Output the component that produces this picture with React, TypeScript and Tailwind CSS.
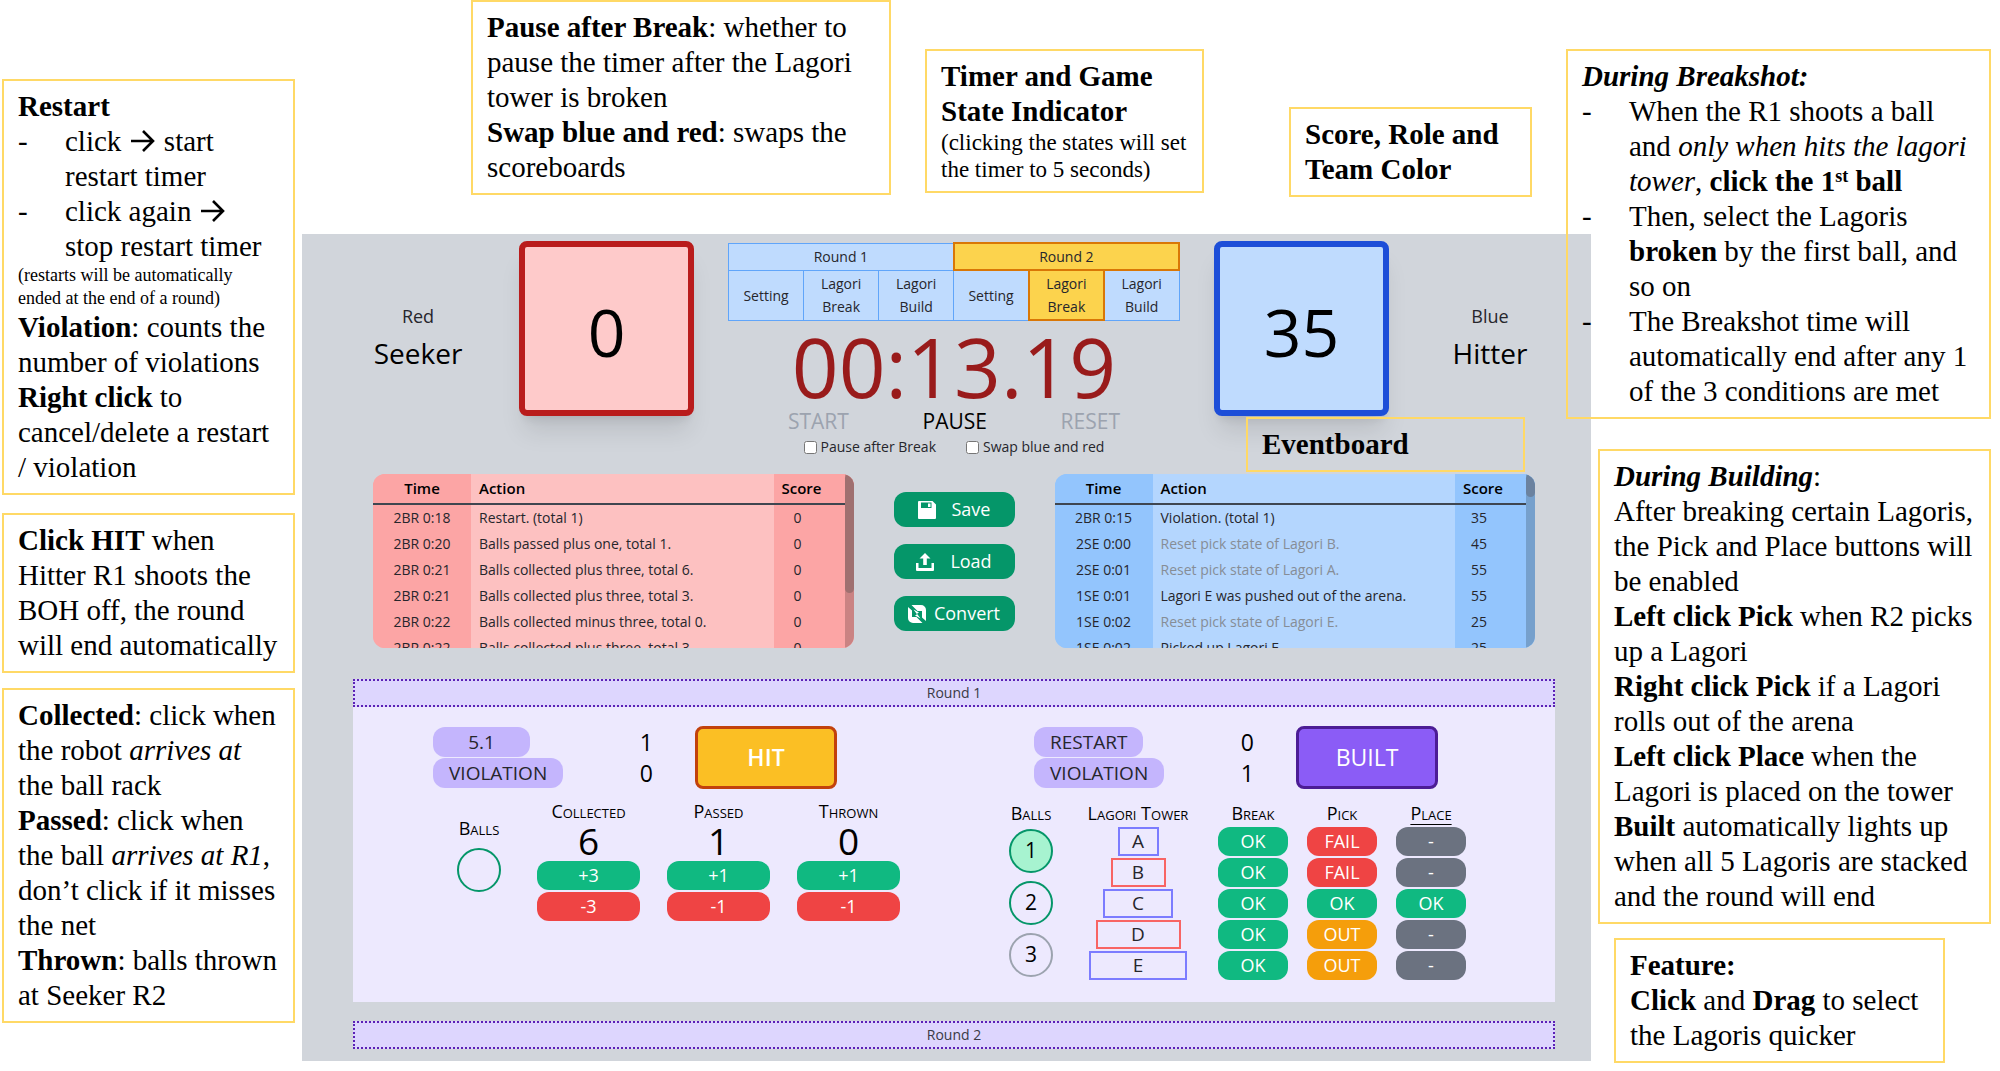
import React from "react";

const serif = "font-['Liberation_Serif',serif]";
const sans = "font-['Open_Sans',sans-serif]";

function Callout({ className = "", children }: { className?: string; children: React.ReactNode }) {
  return (
    <div
      className={`whitespace-nowrap border-2 border-[#ffd966] px-[14px] py-2 text-[29px] leading-[35px] text-black ${className}`}
    >
      {children}
    </div>
  );
}

function Arrow() {
  return (
    <svg viewBox="0 0 24 22" className="mx-0.5 inline h-[22px] w-6 align-[-1px]" fill="none" stroke="currentColor" strokeWidth="2.6" aria-hidden="true">
      <path d="M0 11h22M12 1l10 10-10 10" />
    </svg>
  );
}

function SaveIcon() {
  return (
    <svg viewBox="0 0 18 18" className="size-[18px]" fill="currentColor" fillRule="evenodd" aria-hidden="true">
      <path d="M1 0h13.500L18 3.500V17a1 1 0 0 1-1 1H1a1 1 0 0 1-1-1V1a1 1 0 0 1 1-1zM3 1.500v5.500h10.500v-5.500zM10 2.500h2.500v3.500h-2.500z" />
    </svg>
  );
}

function LoadIcon() {
  return (
    <svg viewBox="0 0 18 18" className="size-[18px]" fill="currentColor" aria-hidden="true">
      <path d="M9 0l5.500 5.500h-3.700V12H7.200V5.500H3.500z" />
      <path d="M0 10h2.500v5h13v-5H18v7a1 1 0 0 1-1 1H1a1 1 0 0 1-1-1z" />
    </svg>
  );
}

function ConvertIcon() {
  return (
    <svg viewBox="0 0 18 18" className="size-[18px]" fill="currentColor" aria-hidden="true">
      <path d="M3.500 0H13a5 5 0 0 1 5 5v11l-4-3.500V6H9.500z" />
      <path d="M14.500 18H5a5 5 0 0 1-5-5V2l4 3.500V12h4.500z" />
      <path d="M5.500 4.500l5.500 3-2 1.200 3.500 4.800L7 10.500l2-1.200z" />
    </svg>
  );
}

type Row = [string, string, string, boolean?];

const redRows: Row[] = [
  ["2BR 0:18", "Restart. (total 1)", "0"],
  ["2BR 0:20", "Balls passed plus one, total 1.", "0"],
  ["2BR 0:21", "Balls collected plus three, total 6.", "0"],
  ["2BR 0:21", "Balls collected plus three, total 3.", "0"],
  ["2BR 0:22", "Balls collected minus three, total 0.", "0"],
  ["2BR 0:22", "Balls collected plus three, total 3.", "0"],
];

const blueRows: Row[] = [
  ["2BR 0:15", "Violation. (total 1)", "35"],
  ["2SE 0:00", "Reset pick state of Lagori B.", "45", true],
  ["2SE 0:01", "Reset pick state of Lagori A.", "55", true],
  ["1SE 0:01", "Lagori E was pushed out of the arena.", "55"],
  ["1SE 0:02", "Reset pick state of Lagori E.", "25", true],
  ["1SE 0:02", "Picked up Lagori E.", "25"],
];

function EventTable({ rows, red }: { rows: Row[]; red?: boolean }) {
  const side = red ? "bg-[#fca5a5]" : "bg-[#93c5fd]";
  const mid = red ? "bg-[#fdc1c1]" : "bg-[#b4d6fe]";
  const line = "border-b-2 border-[#3f4650]";
  return (
    <div className={`relative h-[174px] overflow-hidden rounded-xl ${side}`}>
      <table className="w-full table-fixed border-collapse text-[14px] text-[#26262c]">
        <colgroup>
          <col className="w-[98px]" />
          <col />
          <col className="w-[80px]" />
        </colgroup>
        <thead>
          <tr className="h-[30px] text-[15px] text-black">
            <th className={`${side} ${line} p-0 font-semibold`}>Time</th>
            <th className={`${mid} ${line} px-2 py-0 text-left font-semibold`}>Action</th>
            <th className={`${side} ${line} py-0 pl-2 text-left font-semibold`}>Score</th>
          </tr>
        </thead>
        <tbody>
          {rows.map((r, i) => (
            <tr key={i} className="h-[26px] leading-[26px]">
              <td className={`${side} p-0 text-center`}>{r[0]}</td>
              <td className={`${mid} px-2 py-0 ${r[3] ? "text-[#868d96]" : ""}`}>{r[1]}</td>
              <td className={`${side} py-0 pr-[32px] text-center`}>{r[2]}</td>
            </tr>
          ))}
        </tbody>
      </table>
      <div className={`absolute inset-y-0 right-0 w-[9px] ${red ? "bg-[#ca8383]" : "bg-[#76a0cc]"}`}>
        <div className={`w-full rounded-full ${red ? "h-[119px] bg-[#9f7070]" : "h-[23px] bg-[#6b829f]"}`} />
      </div>
    </div>
  );
}

const stages = ["Setting", "Lagori Break", "Lagori Build", "Setting", "Lagori Break", "Lagori Build"];

function StateTable() {
  const idle = "border border-[#60a5fa] bg-[#bfdbfe]";
  const active = "border-2 border-[#d97706] bg-[#fcd34d]";
  return (
    <table className="mt-px w-[452px] table-fixed border-collapse text-center text-[14px] leading-[23px] text-[#26262c]">
      <tbody>
        <tr className="h-[27px]">
          <td colSpan={3} className={`p-0 ${idle}`}>Round 1</td>
          <td colSpan={3} className={`p-0 ${active}`}>Round 2</td>
        </tr>
        <tr className="h-[50px]">
          {stages.map((s, i) => (
            <td key={i} className={`px-3 py-0 ${i === 4 ? active : idle}`}>{s}</td>
          ))}
        </tr>
      </tbody>
    </table>
  );
}

function ScoreCard({ value, red }: { value: string; red?: boolean }) {
  return (
    <div
      className={`flex size-[175px] items-center justify-center rounded-lg border-[6px] pt-1.5 text-[66px] text-black shadow-xl ${
        red ? "border-[#b91c1c] bg-[#fecaca]" : "border-[#1d4ed8] bg-[#bfdbfe]"
      }`}
    >
      {value}
    </div>
  );
}

function TeamLabel({ team, role }: { team: string; role: string }) {
  return (
    <div className="pt-[61px] text-center">
      <div className="text-[18px] leading-7 text-[#26262c]">{team}</div>
      <div className="text-[28px] leading-[46px] text-black">{role}</div>
    </div>
  );
}

function ActionButton({ icon, children, tight }: { icon: React.ReactNode; children: string; tight?: boolean }) {
  return (
    <button
      type="button"
      className={`flex h-[35px] items-center justify-center rounded-xl bg-[#059669] text-[18px] text-white ${tight ? "gap-2" : "gap-4"}`}
    >
      {icon}
      {children}
    </button>
  );
}

function Counter({ label, value, wide }: { label: string; value: string; wide?: boolean }) {
  return (
    <div className="flex h-[30px] items-center justify-between">
      <button
        type="button"
        className={`h-[30px] rounded-xl bg-[#c4b5fd] text-[19px] leading-7 text-[#26262c] ${wide ? "w-[97px]" : "px-4"}`}
      >
        {label}
      </button>
      <span className="text-[23px] leading-[28px] text-black">{value}</span>
    </div>
  );
}

const caps = "whitespace-nowrap text-center text-[18px] leading-6 text-black [font-variant:small-caps]";

function BallStat({ label, value, step }: { label: string; value: string; step: string }) {
  return (
    <div className="flex w-[103px] flex-col">
      <div className={caps}>{label}</div>
      <div className="mb-0.5 text-center text-[37px] font-medium leading-9 text-black">{value}</div>
      <button type="button" className="h-[29px] rounded-xl bg-[#10b981] text-[18px] text-white">+{step}</button>
      <button type="button" className="mt-0.5 h-[29px] rounded-xl bg-[#ef4444] text-[18px] text-white">-{step}</button>
    </div>
  );
}

const pillColors: Record<string, string> = {
  OK: "bg-[#10b981]",
  FAIL: "bg-[#ef4444]",
  OUT: "bg-[#f59e0b]",
  "-": "bg-[#6b7280]",
};

function PillColumn({ label, items, underline }: { label: string; items: string[]; underline?: boolean }) {
  return (
    <div className="flex w-[70px] flex-col gap-0.5">
      <div className={`${caps} ${underline ? "underline underline-offset-4" : ""}`}>{label}</div>
      {items.map((s, i) => (
        <button key={i} type="button" className={`h-[29px] rounded-xl text-[18px] text-white ${pillColors[s]}`}>
          {s}
        </button>
      ))}
    </div>
  );
}

const tower = [
  { name: "A", cls: "w-[41px] border-[#7c7cff]" },
  { name: "B", cls: "w-[55px] border-[#f86464]" },
  { name: "C", cls: "w-[70px] border-[#7c7cff]" },
  { name: "D", cls: "w-[85px] border-[#f86464]" },
  { name: "E", cls: "w-[98px] border-[#7c7cff]" },
];

const balls = [
  { n: "1", cls: "border-[#059669] bg-[#a7f3d0]" },
  { n: "2", cls: "border-[#059669]" },
  { n: "3", cls: "border-[#9ca3af]" },
];

function RoundBar({ children }: { children: string }) {
  return (
    <h2 className="h-7 border-2 border-dotted border-[#5b21b6] bg-[#ddd6fe] text-center text-[14px] leading-6 text-[#3a3a45]">
      {children}
    </h2>
  );
}

export default function App() {
  return (
    <div className={`flex w-full items-start bg-white ${serif}`}>
      <aside className="w-[302px] shrink-0 pl-0.5 pr-[7px] pt-[79px]">
        <Callout>
          <b>Restart</b>
          <ul>
            {[
              <>click <Arrow /> start<br />restart timer</>,
              <>click again <Arrow /><br />stop restart timer</>,
            ].map((t, i) => (
              <li key={i} className="flex">
                <span className="w-[47px]">-</span>
                <span>{t}</span>
              </li>
            ))}
          </ul>
          <p className="text-[18px] leading-[23px]">
            (restarts will be automatically
            <br />
            ended at the end of a round)
          </p>
          <b>Violation</b>: counts the
          <br />
          number of violations
          <br />
          <b>Right click</b> to
          <br />
          cancel/delete a restart
          <br />/ violation
        </Callout>
        <Callout className="mt-[18px]">
          <b>Click HIT</b> when
          <br />
          Hitter R1 shoots the
          <br />
          BOH off, the round
          <br />
          will end automatically
        </Callout>
        <Callout className="mt-[15px]">
          <b>Collected</b>: click when
          <br />
          the robot <i>arrives at</i>
          <br />
          the ball rack
          <br />
          <b>Passed</b>: click when
          <br />
          the ball <i>arrives at R1</i>,
          <br />
          don’t click if it misses
          <br />
          the net
          <br />
          <b>Thrown</b>: balls thrown
          <br />
          at Seeker R2
        </Callout>
      </aside>

      <main className="min-w-0 flex-1">
        <div className="flex h-[234px] items-start pl-[169px]">
          <Callout className="w-[420px]">
            <b>Pause after Break</b>: whether to
            <br />
            pause the timer after the Lagori
            <br />
            tower is broken
            <br />
            <b>Swap blue and red</b>: swaps the
            <br />
            scoreboards
          </Callout>
          <Callout className="ml-[34px] mt-[49px] w-[279px]">
            <b>
              Timer and Game
              <br />
              State Indicator
            </b>
            <p className="text-[23px] leading-[27px]">
              (clicking the states will set
              <br />
              the timer to 5 seconds)
            </p>
          </Callout>
          <Callout className="ml-[85px] mt-[107px] w-[243px]">
            <b>
              Score, Role and
              <br />
              Team Color
            </b>
          </Callout>
        </div>

        <div className={`relative bg-[#d1d5db] pb-3 pt-[7px] ${sans}`}>
          <div className="grid grid-cols-[1fr_175px_520px_175px_1fr] pl-[15px]">
            <TeamLabel team="Red" role="Seeker" />
            <ScoreCard value="0" red />
            <div className="flex flex-col items-center">
              <StateTable />
              <div className="mb-1 mt-2 text-[82px] leading-[74px] text-[#991b1b]">00:13.19</div>
              <div className="flex w-[332px] justify-between text-[21px] leading-7">
                <button type="button" className="text-[#9ca3af]">START</button>
                <button type="button" className="font-medium text-black">PAUSE</button>
                <button type="button" className="text-[#9ca3af]">RESET</button>
              </div>
              <div className="mt-0.5 flex gap-[30px] text-[14px] leading-5 text-[#26262c]">
                <label className="flex items-center gap-1">
                  <input type="checkbox" className="size-[13px]" />
                  Pause after Break
                </label>
                <label className="flex items-center gap-1">
                  <input type="checkbox" className="size-[13px]" />
                  Swap blue and red
                </label>
              </div>
            </div>
            <ScoreCard value="35" />
            <TeamLabel team="Blue" role="Hitter" />
          </div>

          <div className="mt-[17px] grid grid-cols-[1fr_121px_1fr] gap-x-10 pl-[71px] pr-14">
            <EventTable rows={redRows} red />
            <div className="flex flex-col gap-[17px] pt-[18px]">
              <ActionButton icon={<SaveIcon />}>Save</ActionButton>
              <ActionButton icon={<LoadIcon />}>Load</ActionButton>
              <ActionButton icon={<ConvertIcon />} tight>Convert</ActionButton>
            </div>
            <EventTable rows={blueRows} />
          </div>

          <div className="mt-[31px] pl-[51px] pr-9">
            <RoundBar>Round 1</RoundBar>
            <div className="grid h-[295px] grid-cols-2 bg-[#ede9fe] pt-5">
              <section>
                <div className="flex items-start gap-[42px] pl-20">
                  <div className="flex w-[220px] flex-col gap-px">
                    <Counter label="5.1" value="1" wide />
                    <Counter label="VIOLATION" value="0" />
                  </div>
                  <button type="button" className="-mt-px h-[63px] w-[142px] rounded-lg border-[3px] border-[#c2410c] bg-[#fbbf24] text-[23px] font-semibold text-white">
                    HIT
                  </button>
                </div>
                <div className="flex pl-[104px] pt-2.5">
                  <div className="mr-9 w-11 pt-[17px]">
                    <div className={caps}>Balls</div>
                    <button type="button" aria-label="Ball" className="mt-2 size-11 rounded-full border-2 border-[#059669]" />
                  </div>
                  <div className="flex gap-[27px]">
                    <BallStat label="Collected" value="6" step="3" />
                    <BallStat label="Passed" value="1" step="1" />
                    <BallStat label="Thrown" value="0" step="1" />
                  </div>
                </div>
              </section>

              <section>
                <div className="flex items-start gap-[42px] pl-20">
                  <div className="flex w-[220px] flex-col gap-px">
                    <Counter label="RESTART" value="0" />
                    <Counter label="VIOLATION" value="1" />
                  </div>
                  <button type="button" className="-mt-px h-[63px] w-[142px] rounded-lg border-[3px] border-[#4c1d95] bg-[#8b5cf6] text-[23px] text-white">
                    BUILT
                  </button>
                </div>
                <div className="flex pl-[55px] pt-3">
                  <div className="flex w-11 flex-col gap-2">
                    <div className={`-mb-1 ${caps}`}>Balls</div>
                    {balls.map((b) => (
                      <button key={b.n} type="button" className={`size-11 rounded-full border-2 text-[21px] text-black ${b.cls}`}>
                        {b.n}
                      </button>
                    ))}
                  </div>
                  <div className="ml-8 flex w-[106px] flex-col items-center gap-0.5">
                    <div className={caps}>Lagori Tower</div>
                    {tower.map((t) => (
                      <div key={t.name} className={`h-[29px] border-2 text-center text-[19px] leading-[25px] text-[#26262c] ${t.cls}`}>
                        {t.name}
                      </div>
                    ))}
                  </div>
                  <div className="ml-[27px] flex gap-[19px]">
                    <PillColumn label="Break" items={["OK", "OK", "OK", "OK", "OK"]} />
                    <PillColumn label="Pick" items={["FAIL", "FAIL", "OK", "OUT", "OUT"]} />
                    <PillColumn label="Place" items={["-", "-", "OK", "-", "-"]} underline />
                  </div>
                </div>
              </section>
            </div>
            <div className="mt-[19px]">
              <RoundBar>Round 2</RoundBar>
            </div>
          </div>

          <Callout className={`absolute right-[66px] top-[183px] w-[279px] ${serif}`}>
            <b>Eventboard</b>
          </Callout>
        </div>
      </main>

      <aside className="relative -ml-[25px] w-[434px] shrink-0 pr-[9px] pt-[49px]">
        <Callout>
          <b>
            <i>During Breakshot:</i>
          </b>
          <ul>
            {[
              <>
                When the R1 shoots a ball
                <br />
                and <i>only when hits the lagori</i>
                <br />
                <i>tower</i>,{" "}
                <b>
                  click the 1<sup className="text-[18px] leading-none">st</sup> ball
                </b>
              </>,
              <>
                Then, select the Lagoris
                <br />
                <b>broken</b> by the first ball, and
                <br />
                so on
              </>,
              <>
                The Breakshot time will
                <br />
                automatically end after any 1
                <br />
                of the 3 conditions are met
              </>,
            ].map((t, i) => (
              <li key={i} className="flex">
                <span className="w-[47px]">-</span>
                <span>{t}</span>
              </li>
            ))}
          </ul>
        </Callout>
        <Callout className="ml-8 mt-[30px]">
          <b>
            <i>During Building</i>
          </b>
          :<br />
          After breaking certain Lagoris,
          <br />
          the Pick and Place buttons will
          <br />
          be enabled
          <br />
          <b>Left click Pick</b> when R2 picks
          <br />
          up a Lagori
          <br />
          <b>Right click Pick</b> if a Lagori
          <br />
          rolls out of the arena
          <br />
          <b>Left click Place</b> when the
          <br />
          Lagori is placed on the tower
          <br />
          <b>Built</b> automatically lights up
          <br />
          when all 5 Lagoris are stacked
          <br />
          and the round will end
        </Callout>
        <Callout className="ml-12 mt-[14px] w-[331px]">
          <b>Feature:</b>
          <br />
          <b>Click</b> and <b>Drag</b> to select
          <br />
          the Lagoris quicker
        </Callout>
      </aside>
    </div>
  );
}
